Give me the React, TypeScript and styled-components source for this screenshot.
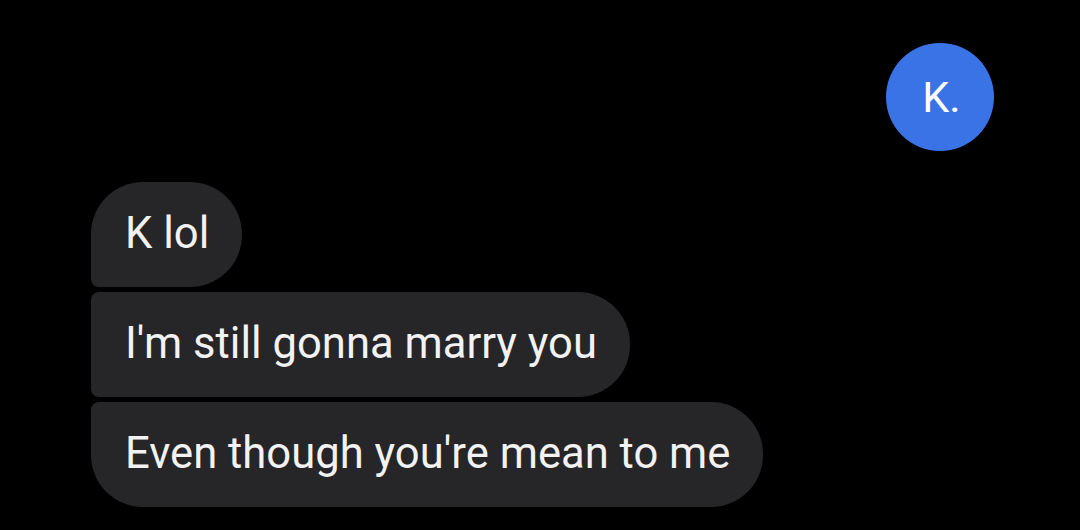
import React from 'react'
import styled, { createGlobalStyle } from 'styled-components'

const GlobalStyle = createGlobalStyle`
  html, body {
    margin: 0;
    padding: 0;
    background: #000;
  }
  body {
    font-family: Roboto, "Noto Sans", sans-serif;
  }
`

const Screen = styled.div`
  width: 1080px;
  height: 530px;
  background: #000;
  display: flex;
  flex-direction: column;
  overflow: hidden;
`

const AvatarRow = styled.div`
  display: flex;
  justify-content: flex-end;
  padding: 43px 86px 0 0;
`

const Avatar = styled.div`
  width: 108px;
  height: 108px;
  border-radius: 50%;
  background: #3a73e6;
  color: #fff;
  display: flex;
  align-items: center;
  justify-content: center;
  font-size: 43px;
  padding-left: 3px;
  box-sizing: border-box;
`

const Thread = styled.div`
  display: flex;
  flex-direction: column;
  align-items: flex-start;
  gap: 5px;
  padding: 31px 0 0 91px;
`

type Pos = 'first' | 'middle' | 'last'

const radius = (pos: Pos) => {
  if (pos === 'first') return '52px 52px 52px 8px'
  if (pos === 'last') return '8px 52px 52px 52px'
  return '8px 52px 52px 8px'
}

const Bubble = styled.div<{ $pos: Pos }>`
  height: 105px;
  box-sizing: border-box;
  padding: 0 33px 2px 34px;
  display: flex;
  align-items: center;
  background: #262528;
  color: #f2f2f2;
  font-size: 43.6px;
  white-space: nowrap;
  border-radius: ${(p) => radius(p.$pos)};
`

const messages = ['K lol', "I'm still gonna marry you", "Even though you're mean to me"]

export default function App() {
  return (
    <Screen>
      <GlobalStyle />
      <AvatarRow>
        <Avatar>K.</Avatar>
      </AvatarRow>
      <Thread>
        {messages.map((m, i) => (
          <Bubble key={m} $pos={i === 0 ? 'first' : i === messages.length - 1 ? 'last' : 'middle'}>
            {m}
          </Bubble>
        ))}
      </Thread>
    </Screen>
  )
}
